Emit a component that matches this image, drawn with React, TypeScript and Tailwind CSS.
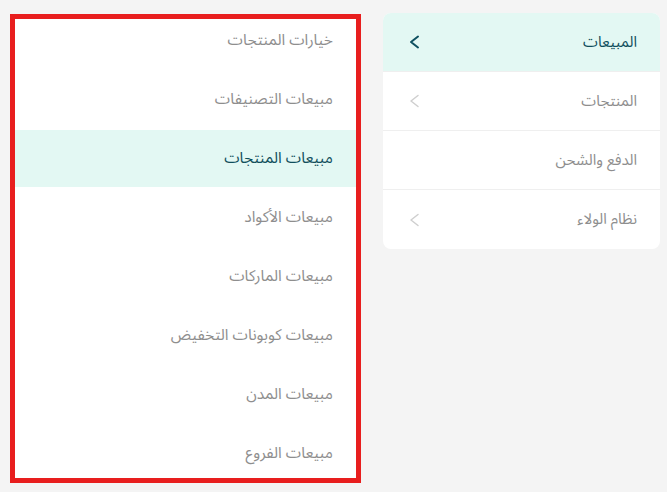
import React from "react";

const subItems = [
  "خيارات المنتجات",
  "مبيعات التصنيفات",
  "مبيعات المنتجات",
  "مبيعات الأكواد",
  "مبيعات الماركات",
  "مبيعات كوبونات التخفيض",
  "مبيعات المدن",
  "مبيعات الفروع",
];

const mainItems = [
  { label: "المبيعات", chevron: true },
  { label: "المنتجات", chevron: true },
  { label: "الدفع والشحن", chevron: false },
  { label: "نظام الولاء", chevron: true },
];

function Chevron({ active }: { active: boolean }) {
  return (
    <svg width="11" height="14" viewBox="0 0 11 14" fill="none">
      <polyline
        points="9,1.5 2,7 9,12.5"
        stroke={active ? "#0f5160" : "#cfcfcf"}
        strokeWidth={active ? 2 : 1.5}
        strokeLinecap="round"
        strokeLinejoin="round"
      />
    </svg>
  );
}

export default function App() {
  return (
    <div
      dir="rtl"
      className="w-[667px] h-[492px] bg-[#f4f4f4] flex items-start gap-[22px] pr-[7px] pt-[13px]"
      style={{ fontFamily: '"Noto Sans Arabic", "DejaVu Sans", sans-serif' }}
    >
      <div className="w-[277px] bg-white rounded-lg overflow-hidden flex flex-col">
        {mainItems.map((it, i) => (
          <div
            key={it.label}
            className={`h-[59px] flex items-center justify-between pr-[23px] pl-[26px] ${
              i < mainItems.length - 1 ? "border-b border-[#efefef]" : ""
            } ${i === 0 ? "bg-[#e3f8f3] text-[#104f5c]" : "text-[#8e8e8e]"}`}
          >
            <span className="text-[15px]">{it.label}</span>
            {it.chevron ? <Chevron active={i === 0} /> : <span />}
          </div>
        ))}
      </div>
      <div className="w-[351px] h-[469px] mt-px border-[5px] border-[#e81e1e] bg-white overflow-hidden">
        <div className="-mt-[8px] flex flex-col">
          {subItems.map((s, i) => (
            <div
              key={s}
              className={`h-[59px] shrink-0 flex items-center pr-[23px] border-y border-white bg-clip-padding ${
                i === 2 ? "bg-[#e3f8f3] text-[#104f5c]" : "text-[#8e8e8e]"
              }`}
            >
              <span className="text-[15.5px]">{s}</span>
            </div>
          ))}
        </div>
      </div>
    </div>
  );
}
